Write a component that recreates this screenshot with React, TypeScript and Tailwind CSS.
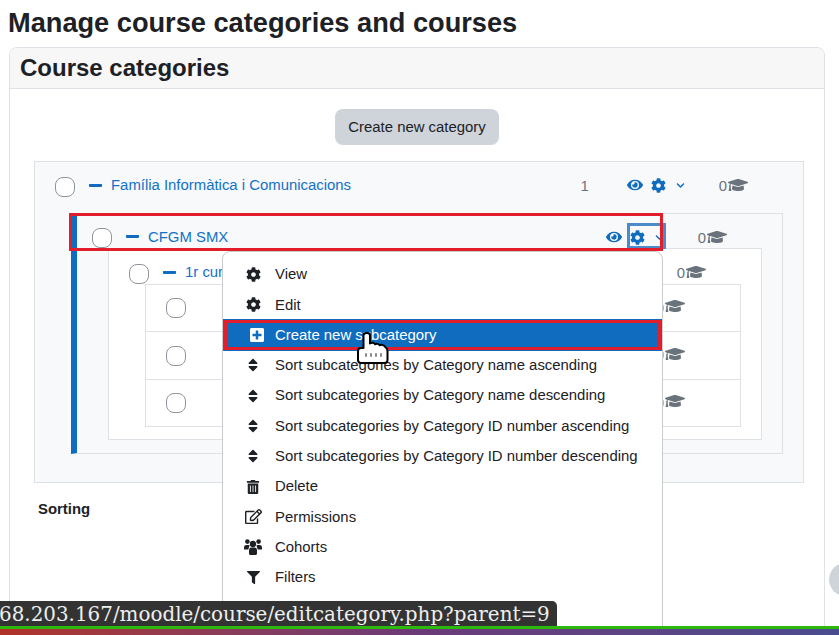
import type { ReactNode } from "react";
import {
  FaChevronDown,
  FaCog,
  FaEye,
  FaFilter,
  FaGraduationCap,
  FaMinus,
  FaPlusSquare,
  FaRegEdit,
  FaSort,
  FaTrashAlt,
} from "react-icons/fa";

function CohortsIcon() {
  return (
    <svg width="18" height="16" viewBox="0 0 18 16" fill="currentColor">
      <circle cx="3.400" cy="2.600" r="2.300" />
      <circle cx="14.600" cy="2.600" r="2.300" />
      <circle cx="9" cy="5" r="3.200" />
      <path d="M0 8.500C0 6.800 1.200 6 2.500 6h2c.4 0 .7.100 1 .2C5.300 7.500 5 9 4.200 10.500H0z" />
      <path d="M18 8.500C18 6.800 16.800 6 15.500 6h-2c-.4 0-.7.100-1 .2.200 1.300.5 2.800 1.300 4.300H18z" />
      <path d="M5 11c0-1.700 1.300-2.500 2.500-2.500h3c1.200 0 2.500.8 2.500 2.500v3.500c0 .8-.6 1.500-1.500 1.500h-5c-.9 0-1.500-.7-1.500-1.500z" />
    </svg>
  );
}

const menuItems = [
  { label: "View", icon: <FaCog size={15} /> },
  { label: "Edit", icon: <FaCog size={15} /> },
  { label: "Create new subcategory", icon: <FaPlusSquare size={16} />, active: true },
  { label: "Sort subcategories by Category name ascending", icon: <FaSort size={16} /> },
  { label: "Sort subcategories by Category name descending", icon: <FaSort size={16} /> },
  { label: "Sort subcategories by Category ID number ascending", icon: <FaSort size={16} /> },
  { label: "Sort subcategories by Category ID number descending", icon: <FaSort size={16} /> },
  { label: "Delete", icon: <FaTrashAlt size={14} /> },
  { label: "Permissions", icon: <FaRegEdit size={17} /> },
  { label: "Cohorts", icon: <CohortsIcon /> },
  { label: "Filters", icon: <FaFilter size={13} /> },
];

function Checkbox() {
  return <span className="block w-5 h-5 shrink-0 rounded-[8px] border border-[#8f959e] bg-white" />;
}

function CourseCount() {
  return (
    <span className="flex items-center text-[#6a737b]">
      <span>0</span>
      <FaGraduationCap size={20} className="ml-[1px] -mt-[3px]" />
    </span>
  );
}

function CategoryRow({ name, count, actions }: { name?: string; count?: string; actions?: boolean }) {
  return (
    <div className="flex items-center h-full">
      <Checkbox />
      {name && (
        <>
          <FaMinus size={15} className="ml-[13px] text-[#0f6cbf] -mt-[3px] shrink-0" />
          <a className="ml-[8px] -mt-[2px] text-[#1272c8] whitespace-nowrap">{name}</a>
        </>
      )}
      <div className="ml-auto flex items-center pr-[55px]">
        {count && <span className="mr-[38px] -mt-[1px] text-[#6a737b]">{count}</span>}
        {actions && (
          <span className="flex items-center mr-[34px] -mt-[2px] text-[#0f6cbf]">
            <FaEye size={16} />
            <FaCog size={15} className="ml-[8px]" />
            <FaChevronDown size={9} className="ml-[10px]" />
          </span>
        )}
        <CourseCount />
      </div>
    </div>
  );
}

function Panel({ className, children }: { className: string; children: ReactNode }) {
  return <div className={`border border-[#dee2e6] ${className}`}>{children}</div>;
}

function HandCursor() {
  return (
    <svg width="36" height="36" viewBox="0 0 36 36" className="absolute left-[355px] top-[331px]">
      <path
        d="M8.500 17V4.500c0-3.300 6.500-3.300 6.500 0v8c2-1.200 4.500-.8 5 .8 1.800-1 4-.5 4.500 1 1.800-.8 4.500-.2 6 2 1.400 1 2 2 2 3.700V29c0 2-1 3-3 3H6c-2 0-3-1-3-3v-9c0-2 1-3 3-3z"
        fill="#fff"
        stroke="#000"
        strokeWidth="2"
        strokeLinejoin="round"
      />
      <path d="M11 23v2M16 23v2M21 23v2M26 23v2" stroke="#8a8a8a" strokeWidth="2" strokeLinecap="round" />
    </svg>
  );
}

export default function App() {
  return (
    <div
      className="relative h-[635px] w-[839px] overflow-hidden bg-white text-[14.900px] text-[#1d2125]"
      style={{ fontFamily: '"Liberation Sans", Arial, sans-serif' }}
    >
      <h1 className="pl-2 pt-[7px] h-[47px] text-[27.200px] leading-[32px] font-bold">
        Manage course categories and courses
      </h1>

      {/* Course categories card */}
      <div className="ml-[9px] w-[816px] h-[700px] border border-[#dee2e6] rounded-t-[8px]">
        <div className="h-[41px] pl-[10px] bg-[#f7f7f7] border-b border-[#dee2e6] rounded-t-[8px] text-[24px] leading-[40px] font-bold">
          Course categories
        </div>
        <div className="flex justify-center pt-[20px]">
          <button className="h-9 w-[164px] rounded-[8px] bg-[#ced4da] text-[#1d2125]">Create new category</button>
        </div>

        <Panel className="mt-[16px] ml-[24px] mr-[20px] bg-[#f8f9fa] pb-[28px]">
          <div className="h-[51px] pl-[20px] pb-[2px]">
            <CategoryRow name="Família Informàtica i Comunicacions" count="1" actions />
          </div>
          <Panel className="ml-[36px] mr-[20px] pb-[13px] bg-[#f8f9fa] border-l-[6px] border-l-[#0f6cbf]">
            <div className="h-[34px] pl-[15px] pt-[14px]">
              <CategoryRow name="CFGM SMX" actions />
            </div>
            <Panel className="ml-[31px] mr-[20px] pb-[12px] bg-white">
              <div className="h-[35px] pl-[20px] pt-[14px]">
                <CategoryRow name="1r curs" />
              </div>
              <Panel className="ml-[36px] mr-[20px] divide-y divide-[#dee2e6]">
                <div className="h-[47px] pl-[20px]">
                  <CategoryRow />
                </div>
                <div className="h-[48px] pl-[20px]">
                  <CategoryRow />
                </div>
                <div className="h-[46px] pl-[20px]">
                  <CategoryRow />
                </div>
              </Panel>
            </Panel>
          </Panel>
        </Panel>

        <div className="mt-[15px] pl-[28px] font-bold">Sorting</div>
      </div>

      {/* Annotations over the page */}
      <div className="absolute left-[627px] top-[223px] w-[39px] h-[26px] border-[3px] border-[#4a8bc9]" />
      <div className="absolute left-[69px] top-[213px] w-[594px] h-[38px] border-[3px] border-[#e21e2d]" />

      {/* Dropdown menu */}
      <div className="absolute left-[222px] top-[251px] w-[441px] h-[400px] pt-[7.300px] bg-white border border-[#c9cccf] rounded-t-[8px]">
        {menuItems.map((item) => (
          <div
            key={item.label}
            className={`flex items-center h-[30.300px] ${
              item.active ? "mx-[1px] bg-[#0f6cbf] text-white border-[3px] border-[#e21e2d] outline outline-1 outline-[#0f6cbf]" : ""
            }`}
          >
            <span className={`flex justify-center shrink-0 ${item.active ? "w-[48px] pl-[12px]" : "w-[52px] pl-[11px] pr-[3px]"}`}>
              {item.icon}
            </span>
            <span>{item.label}</span>
          </div>
        ))}
      </div>
      <HandCursor />

      {/* Drawer toggle */}
      <div className="absolute left-[829px] top-[563px] w-[33px] h-[33px] rounded-full bg-[#ced4da]" />

      {/* Browser status bubble and desktop strip */}
      <div
        className="absolute left-0 top-[601px] w-[557px] h-[26px] rounded-tr-[5px] bg-[#333333] text-[#eeeeee] text-[19.900px] leading-[28px] -indent-[1px] whitespace-nowrap overflow-hidden"
        style={{ fontFamily: '"DejaVu Serif", serif' }}
      >
        68.203.167/moodle/course/editcategory.php?parent=9
      </div>
      <div className="absolute left-0 top-[626px] w-full h-[3px] bg-[#2cb80c]" />
      <div className="absolute left-0 top-[629px] w-full h-[6px] bg-gradient-to-r from-[#b03226] via-[#6b3a78] to-[#4a4c90]" />
    </div>
  );
}
